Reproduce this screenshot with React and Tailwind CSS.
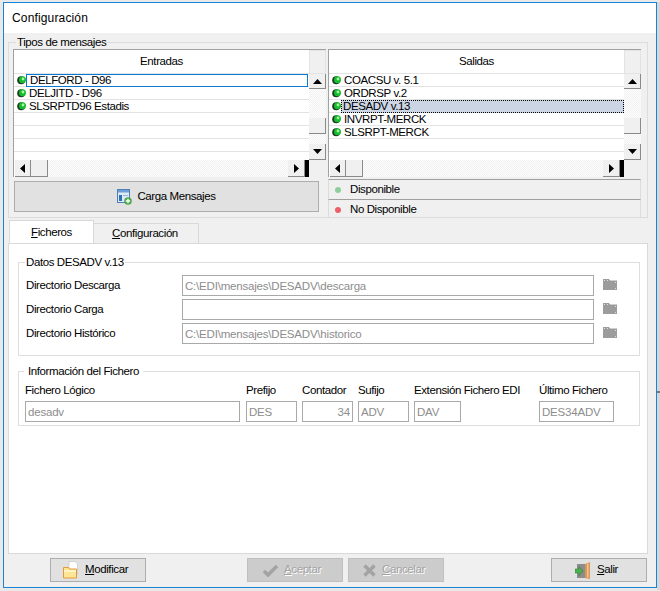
import React from "react";

const Ball = ({ className = "" }) => (
  <svg width="10" height="10" viewBox="0 0 10 10" className={"shrink-0 " + className}>
    <circle cx="4.200" cy="5.200" r="4" fill="#1f3b26" />
    <circle cx="5.500" cy="4.800" r="3.500" fill="#16bd2e" />
    <circle cx="6" cy="4" r="1.400" fill="#a6f7a0" />
  </svg>
);

const UpArrow = () => (
  <svg width="9" height="5" viewBox="0 0 9 5"><path d="M4.5 0L9 5H0z" fill="#000" /></svg>
);
const DownArrow = () => (
  <svg width="9" height="5" viewBox="0 0 9 5"><path d="M0 0h9L4.5 5z" fill="#000" /></svg>
);
const LeftArrow = () => (
  <svg width="5" height="9" viewBox="0 0 5 9"><path d="M5 0v9L0 4.5z" fill="#000" /></svg>
);
const RightArrow = () => (
  <svg width="5" height="9" viewBox="0 0 5 9"><path d="M0 0l5 4.5L0 9z" fill="#000" /></svg>
);

const ScrollBtn = ({ children, className = "" }) => (
  <div className={"flex items-center justify-center bg-[#f0f0f0] border-r border-b border-[#8a8a8a] " + className}>
    {children}
  </div>
);

const Track = "bg-[repeating-conic-gradient(#f0f0f0_0_25%,#ffffff_0_50%)] bg-[length:2px_2px]";

const Grid = ({ title, rows, focused, selected }) => (
  <div className="w-[313px] h-[128px] flex flex-col border-l border-t border-[#a0a0a0] bg-white">
    <div className="flex h-[110px]">
      <div className="flex-1 min-w-0 overflow-hidden">
        <div className="h-[24px] flex items-center justify-center border-b border-[#e3e3e3]">{title}</div>
        {Array.from({ length: 6 }).map((_, i) => {
          const r = rows[i];
          return (
            <div key={i} className="h-[13px] flex items-center pl-[3px] border-b border-[#e3e3e3]">
              {r && <Ball />}
              {r && i === focused && (
                <span className="ml-[-1px] flex-1 h-[13px] border border-[#0a78d2] pl-[3px] leading-[11px] mr-[1px]">{r}</span>
              )}
              {r && i === selected && (
                <span className="flex-1 h-[13px] bg-[#ccd5e3] border border-dotted border-black pl-[1px] leading-[11px] ml-[-1px]">{r}</span>
              )}
              {r && i !== focused && i !== selected && <span className="ml-[2px] leading-[12px]">{r}</span>}
            </div>
          );
        })}
      </div>
      <div className="w-[17px] flex flex-col">
        <div className="h-[24px] bg-[#f0f0f0] border-r border-b border-t border-l border-[#e3e3e3]" />
        <ScrollBtn className="h-[15px]"><UpArrow /></ScrollBtn>
        <div className={"h-[29px] " + Track} />
        <ScrollBtn className="h-[16px]" />
        <div className={"h-[10px] " + Track} />
        <ScrollBtn className="h-[16px]"><DownArrow /></ScrollBtn>
      </div>
    </div>
    <div className="flex h-[17px]">
      <ScrollBtn className="w-[16px] ml-[1px]"><LeftArrow /></ScrollBtn>
      <ScrollBtn className="w-[17px]" />
      <div className={"flex-1 " + Track} />
      <ScrollBtn className="w-[17px]"><RightArrow /></ScrollBtn>
      <div className="w-[4px] bg-black" />
      <div className="w-[17px] bg-[#f0f0f0]" />
    </div>
  </div>
);

const Folder = () => (
  <svg width="14" height="11" viewBox="0 0 14 11" className="shrink-0 ml-[9px] mb-[2px]">
    <path d="M0 0h6l1 1.500h7V11H0z" fill="#9c9c9c" />
    <path d="M1 1h1v1H1zM4 1h1v1H4zM12 3h1v1h-1zM12 9h1v1h-1z" fill="#e0e0e0" />
  </svg>
);

const Field = ({ value, className = "" }) => (
  <input
    readOnly
    value={value}
    className={"h-[21px] border border-[#a9a9a9] bg-white px-[2px] text-[11.5px] tracking-[-0.2px] text-[#8d8d8d] outline-none " + className}
  />
);

const DirRow = ({ label, value }) => (
  <div className="flex items-center h-[21px] mb-[3px] pl-[7px]">
    <div className="w-[156px]">{label}</div>
    <Field value={value} className="w-[412px]" />
    <Folder />
  </div>
);

const InfoCol = ({ label, value, className = "", inputClass = "" }) => (
  <div className={"flex flex-col " + className}>
    <div className="h-[16px] leading-[11px] whitespace-nowrap">{label}</div>
    <Field value={value} className={"w-full " + inputClass} />
  </div>
);

const FootBtn = ({ children, disabled, className = "" }) => (
  <div
    className={
      "w-[96px] h-[24px] flex items-center gap-[6px] border " +
      (disabled
        ? "bg-[#cccccc] border-[#bfbfbf] text-[#a3a3a3] [text-shadow:1px_1px_0_#ffffff] "
        : "bg-[#e1e1e1] border-[#adadad] ") +
      className
    }
  >
    {children}
  </div>
);

export default function App() {
  return (
    <div className="w-[660px] h-[591px] overflow-hidden bg-[#e9e9e9] font-['Liberation_Sans',sans-serif] text-[11.5px] tracking-[-0.4px] text-black pt-[2px] pl-[3px] flex">
      <div className="w-[654px] h-[586px] shrink-0 border border-[#1883d7] bg-[#f0f0f0] flex flex-col">
        <div className="h-[30px] bg-white pl-[8px] flex items-center text-[12px] tracking-[0.15px]">Configuración</div>

        <fieldset className="ml-[4px] mt-[2px] w-[640px] h-[183px] border border-[#dcdcdc] pl-[4px]">
          <legend className="ml-[3px] px-[1px] leading-[14px]">Tipos de mensajes</legend>
          <div className="flex gap-[2px]">
            <div className="w-[313px]">
              <Grid title="Entradas" focused={0} rows={["DELFORD - D96", "DELJITD - D96", "SLSRPTD96 Estadis"]} />
              <div className="ml-[1px] mt-[4px] w-[305px] h-[31px] bg-[#e1e1e1] border border-[#adadad] flex items-center justify-center gap-[5px]">
                <svg width="15" height="16" viewBox="0 0 15 16">
                  <rect x="0.500" y="0.500" width="12" height="13" fill="#dce9f7" stroke="#4f7fb5" />
                  <rect x="1" y="1" width="11" height="2.500" fill="#6f9fd6" />
                  <rect x="2" y="6" width="3" height="6" fill="#2f6fb5" />
                  <rect x="6" y="6" width="5" height="1" fill="#9bb5d2" />
                  <circle cx="11" cy="12" r="3.800" fill="#4aa84a" />
                  <path d="M10.300 9.800h1.400v1.500h1.500v1.400h-1.500v1.500h-1.400v-1.500H8.800v-1.400h1.500z" fill="#fff" />
                </svg>
                <span>Carga Mensajes</span>
              </div>
            </div>
            <div className="w-[313px]">
              <Grid title="Salidas" selected={2} rows={["COACSU v. 5.1", "ORDRSP v.2", "DESADV v.13", "INVRPT-MERCK", "SLSRPT-MERCK"]} />
              <div className="mt-[2px] h-[20px] pt-[1px] border-t border-x border-t-[#a0a0a0] border-x-[#dcdcdc] flex items-center pl-[6px]">
                <span className="w-[6px] h-[6px] rounded-full bg-[#8fce9a]" />
                <span className="ml-[9px]">Disponible</span>
              </div>
              <div className="h-[19px] pt-[1px] border-t border-x border-t-[#a0a0a0] border-x-[#dcdcdc] flex items-center pl-[6px]">
                <span className="w-[6px] h-[6px] rounded-full bg-[#ef5f6b]" />
                <span className="ml-[9px]">No Disponible</span>
              </div>
            </div>
          </div>
        </fieldset>

        <div className="flex items-end ml-[5px] mt-[3px] h-[22px] relative z-10">
          <div className="w-[85px] h-[23px] bg-white border border-b-0 border-[#d9d9d9] flex items-center justify-center pt-[2px]">
            <span><span className="underline">F</span>icheros</span>
          </div>
          <div className="w-[105px] h-[20px] bg-[#f0f0f0] border border-b-0 border-l-0 border-[#d9d9d9] flex items-center justify-center pr-[2px]">
            <span><span className="underline">C</span>onfiguración</span>
          </div>
        </div>

        <div className="ml-[4px] w-[640px] h-[311px] bg-white border border-[#d9d9d9] pt-[11px] pl-[9px]">
          <fieldset className="w-[622px] h-[101px] border border-[#dedede]">
            <legend className="ml-[6px] px-[1px] leading-[14px]">Datos DESADV v.13</legend>
            <div className="mt-[6px]">
              <DirRow label="Directorio Descarga" value="C:\EDI\mensajes\DESADV\descarga" />
              <DirRow label="Directorio Carga" value="" />
              <DirRow label="Directorio Histórico" value="C:\EDI\mensajes\DESADV\historico" />
            </div>
          </fieldset>
          <fieldset className="mt-[8px] w-[622px] h-[62px] border border-[#dedede]">
            <legend className="ml-[5px] px-[4px] leading-[14px]">Información del Fichero</legend>
            <div className="flex mt-[7px] pl-[6px]">
              <InfoCol label="Fichero Lógico" value="desadv" className="w-[215px]" />
              <InfoCol label="Prefijo" value="DES" className="w-[51px] ml-[6px]" />
              <InfoCol label="Contador" value="34" className="w-[51px] ml-[5px]" inputClass="text-right" />
              <InfoCol label="Sufijo" value="ADV" className="w-[51px] ml-[5px]" />
              <InfoCol label="Extensión Fichero EDI" value="DAV" className="w-[47px] ml-[5px]" />
              <InfoCol label="Último Fichero" value="DES34ADV" className="w-[75px] ml-[78px]" />
            </div>
          </fieldset>
        </div>

        <div className="flex mt-[4px] ml-[46px]">
          <FootBtn className="pl-[12px]">
            <svg width="15" height="18" viewBox="0 0 15 18">
              <path d="M6 0.500h6l2.500 2.500v10H6z" fill="#ffffff" stroke="#c4c4c4" strokeWidth="0.700" />
              <path d="M0.500 6.500h5l1 1.500h7v9h-13z" fill="#fde596" stroke="#e39a3a" />
              <rect x="1" y="9" width="12" height="2" fill="#fff3c4" />
            </svg>
            <span className="ml-[1px]"><span className="underline">M</span>odificar</span>
          </FootBtn>
          <FootBtn disabled className="ml-[101px] pl-[15px]">
            <svg width="15" height="13" viewBox="0 0 15 13">
              <path d="M1 7l4 4L14 2" fill="none" stroke="#a3a3a3" strokeWidth="3.500" />
            </svg>
            <span><span className="underline">A</span>ceptar</span>
          </FootBtn>
          <FootBtn disabled className="ml-[5px] pl-[14px]">
            <svg width="13" height="13" viewBox="0 0 13 13">
              <path d="M1.500 1.500l10 10M11.500 1.500l-10 10" fill="none" stroke="#a3a3a3" strokeWidth="3.500" />
            </svg>
            <span><span className="underline">C</span>ancelar</span>
          </FootBtn>
          <FootBtn className="ml-[107px] pl-[23px]">
            <svg width="16" height="17" viewBox="0 0 16 17">
              <rect x="2" y="2" width="8" height="14" fill="#8c8c8c" />
              <path d="M10 2l5-2v17l-5-1z" fill="#d9985a" />
              <path d="M12 1.500h1.500v14H12z" fill="#f2c58c" />
              <path d="M0 7h4V4.500L8 9l-4 4.500V11H0z" fill="#4caf50" stroke="#2e7d32" strokeWidth="0.500" />
            </svg>
            <span><span className="underline">S</span>alir</span>
          </FootBtn>
        </div>
      </div>
      <div className="w-[3px] h-[588px] bg-[#d6d6d6] flex flex-col">
        <div className="h-[389px]" />
        <div className="h-[2px] bg-[#777777]" />
      </div>
    </div>
  );
}
